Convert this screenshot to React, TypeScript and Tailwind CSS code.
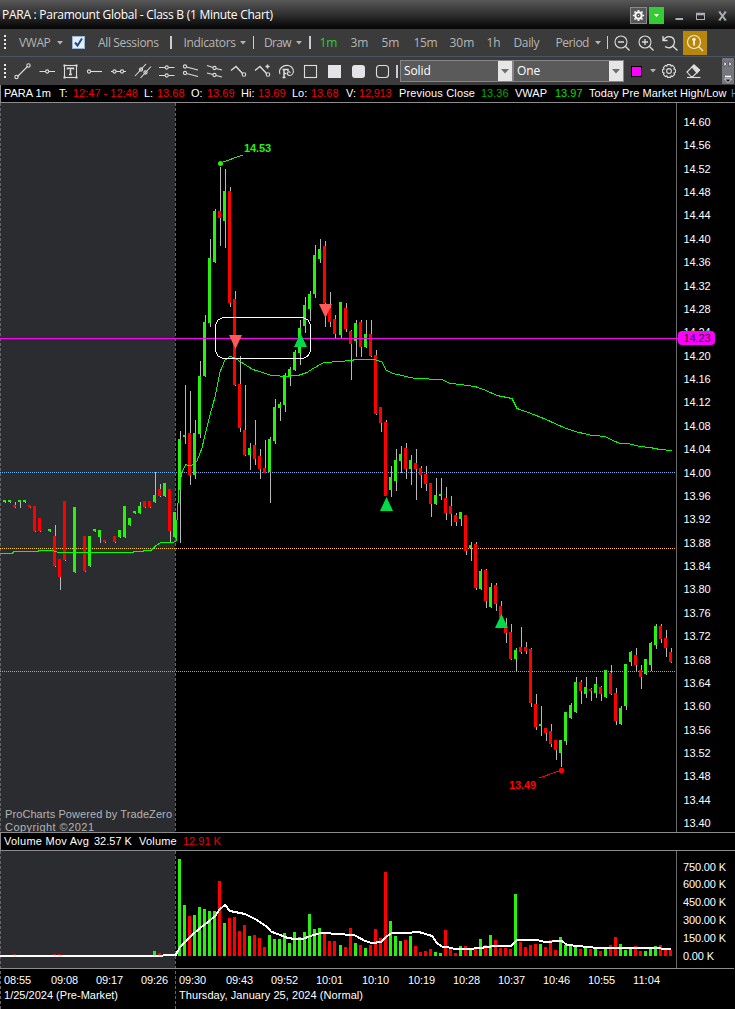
import type { ReactNode } from "react";

type Candle = [
  x: number,
  color: "g" | "r",
  open: number,
  close: number,
  high: number,
  low: number,
];

const UP = "#2af010";
const DOWN = "#ff0000";

const CANDLES: Candle[] = [
  [3, "g", 500, 502, 500, 503], [8, "g", 500, 502, 500, 503], [13, "r", 505, 507, 502, 508],
  [18, "g", 500, 502, 500, 508], [23, "g", 500, 502, 500, 503], [28, "r", 505, 507, 505, 508],
  [33, "r", 506, 531, 506, 532], [38, "r", 518, 531, 518, 532], [48, "g", 529, 531, 529, 532],
  [53, "r", 536, 566, 525, 567], [58, "r", 559, 577, 559, 590], [63, "r", 501, 560, 501, 561],
  [73, "g", 507, 572, 507, 573], [83, "r", 536, 571, 536, 572], [88, "g", 536, 566, 536, 567],
  [93, "g", 529, 531, 529, 532], [98, "g", 530, 537, 530, 543], [103, "r", 540, 542, 540, 543],
  [113, "r", 536, 542, 536, 543], [118, "g", 530, 537, 530, 538], [123, "g", 506, 537, 506, 538],
  [128, "g", 518, 525, 518, 526], [133, "g", 511, 513, 511, 514], [138, "g", 506, 513, 502, 514],
  [143, "r", 501, 507, 501, 508], [148, "r", 501, 507, 501, 508], [153, "g", 495, 502, 472, 503],
  [158, "r", 489, 496, 484, 497], [163, "g", 483, 496, 483, 497], [168, "r", 489, 531, 489, 542],
  [173, "g", 512, 537, 512, 538], [178, "g", 439, 490, 431, 543], [183, "g", 435, 437, 385, 444],
  [188, "r", 433, 475, 391, 485], [193, "g", 433, 475, 420, 479], [198, "g", 376, 434, 361, 438],
  [203, "g", 322, 376, 315, 377], [208, "g", 258, 323, 239, 327], [213, "g", 211, 262, 209, 263],
  [218, "r", 211, 218, 167, 246], [223, "g", 191, 221, 169, 248], [228, "r", 191, 303, 187, 307],
  [233, "r", 299, 385, 291, 386], [238, "r", 384, 428, 356, 432], [243, "r", 430, 455, 385, 456],
  [248, "g", 448, 455, 443, 470], [253, "r", 445, 459, 420, 465], [258, "r", 456, 469, 449, 479],
  [263, "r", 468, 473, 440, 473], [268, "g", 439, 472, 437, 503], [273, "g", 407, 441, 399, 444],
  [278, "g", 404, 408, 402, 421], [283, "g", 375, 405, 373, 412], [288, "g", 369, 377, 367, 386],
  [293, "g", 352, 370, 350, 371], [298, "g", 328, 353, 320, 365], [303, "g", 305, 326, 297, 333],
  [308, "g", 294, 309, 291, 321], [313, "g", 255, 294, 245, 298], [318, "g", 249, 259, 239, 263],
  [323, "r", 246, 303, 241, 327], [328, "r", 308, 322, 292, 327], [333, "r", 319, 334, 315, 338],
  [339, "g", 302, 335, 302, 338], [344, "r", 308, 329, 303, 332], [349, "r", 331, 344, 330, 380],
  [354, "g", 323, 341, 320, 357], [359, "r", 322, 347, 320, 357], [364, "g", 334, 347, 320, 348],
  [369, "r", 334, 356, 320, 357], [374, "r", 355, 414, 350, 415], [379, "r", 407, 423, 407, 432],
  [384, "r", 422, 496, 420, 496], [389, "g", 477, 490, 466, 497], [394, "g", 460, 481, 449, 491],
  [399, "g", 454, 461, 446, 473], [404, "r", 448, 469, 443, 479], [409, "g", 460, 469, 455, 485],
  [414, "r", 463, 469, 449, 500], [419, "r", 468, 475, 466, 488], [424, "r", 474, 484, 466, 491],
  [429, "r", 483, 504, 483, 517], [434, "g", 495, 504, 478, 505], [439, "g", 494, 496, 478, 500],
  [444, "r", 498, 513, 487, 520], [449, "r", 506, 514, 496, 526], [454, "r", 515, 522, 513, 526],
  [459, "g", 512, 519, 512, 526], [464, "r", 515, 551, 515, 555], [469, "g", 545, 548, 542, 561],
  [474, "r", 544, 588, 542, 590], [479, "g", 571, 589, 569, 590], [484, "r", 570, 601, 569, 608],
  [489, "g", 587, 607, 583, 608], [494, "r", 585, 604, 583, 611], [499, "r", 606, 618, 601, 620],
  [504, "r", 625, 633, 618, 643], [509, "r", 632, 659, 624, 660], [514, "g", 650, 659, 648, 671],
  [519, "r", 647, 652, 627, 654], [524, "r", 647, 651, 642, 654], [529, "r", 649, 703, 648, 707],
  [534, "r", 704, 727, 694, 730], [539, "g", 724, 726, 706, 736], [544, "r", 728, 733, 728, 741],
  [549, "r", 731, 744, 724, 747], [554, "r", 740, 750, 740, 760], [559, "g", 740, 753, 740, 767],
  [564, "g", 712, 741, 712, 745], [569, "g", 705, 718, 703, 719], [574, "g", 682, 712, 677, 713],
  [579, "r", 682, 691, 680, 704], [584, "g", 687, 694, 677, 698], [589, "r", 689, 691, 688, 701],
  [594, "g", 684, 693, 677, 698], [599, "r", 687, 694, 686, 701], [604, "g", 670, 697, 670, 698],
  [609, "r", 673, 694, 665, 695], [614, "r", 693, 721, 688, 725], [619, "g", 708, 724, 706, 725],
  [624, "g", 664, 706, 664, 710], [629, "g", 652, 662, 651, 666], [634, "r", 655, 665, 648, 671],
  [639, "r", 670, 677, 665, 689], [644, "g", 659, 674, 659, 675], [649, "g", 643, 665, 642, 671],
  [654, "g", 626, 645, 624, 649], [659, "r", 626, 639, 624, 643], [664, "r", 638, 648, 630, 657],
  [669, "r", 652, 662, 648, 663],
];

// tops of the volume bars, the regular session starts at x = 178
const VOLUME_TOPS: [number, string][] = [
  [859, "g"], [905, "g"], [916, "r"], [915, "g"], [907, "g"], [909, "g"], [911, "g"], [911, "g"],
  [881, "r"], [923, "g"], [918, "r"], [917, "r"], [931, "r"], [925, "r"], [936, "g"], [935, "r"],
  [938, "r"], [947, "r"], [935, "g"], [939, "g"], [939, "g"], [933, "g"], [943, "g"], [932, "g"],
  [937, "g"], [932, "g"], [914, "g"], [929, "g"], [928, "g"], [934, "r"], [941, "r"], [941, "r"],
  [945, "g"], [947, "r"], [928, "r"], [943, "g"], [945, "r"], [948, "g"], [945, "r"], [929, "r"],
  [938, "r"], [872, "r"], [921, "g"], [936, "g"], [941, "g"], [940, "r"], [936, "g"], [946, "r"],
  [952, "r"], [951, "r"], [949, "r"], [952, "g"], [953, "g"], [930, "r"], [949, "r"], [953, "r"],
  [946, "g"], [946, "r"], [950, "g"], [949, "r"], [939, "g"], [945, "r"], [935, "g"], [940, "r"],
  [948, "r"], [948, "r"], [949, "r"], [894, "g"], [942, "r"], [947, "r"], [945, "r"], [944, "r"],
  [944, "g"], [947, "r"], [940, "r"], [950, "r"], [937, "g"], [945, "g"], [945, "g"], [945, "g"],
  [949, "r"], [948, "g"], [949, "r"], [948, "g"], [951, "r"], [949, "g"], [945, "r"], [937, "r"],
  [944, "g"], [950, "g"], [949, "g"], [946, "r"], [951, "r"], [951, "g"], [949, "g"], [946, "g"],
  [945, "r"], [950, "r"], [950, "r"],
];

const PRE_VOLUME: [number, number, string][] = [
  [13, 954, "r"], [53, 954, "r"], [58, 954, "r"], [153, 951, "g"],
  [158, 953, "r"], [163, 955, "g"], [168, 954, "r"],
];

const VWAP_LINE =
  "0,553.5 12,553.5 14,551.5 38,551.5 39,550.5 53,550.5 58,552.5 133,552.5 134,551.5 143,551.5 144,550.5 151,550.5 156,545.5 161,542.5 173,542.5 176,541 177,520 179,487 182,472 186,464.5 190,466 194,464 197,461 202,448 205,435 210,415 215,397 220,372 225,360 230,356.5 235,358 240,361.5 253,369.5 270,375 285,376.5 298,375.5 307,372.5 313,368.5 323,363 337,361.5 353,360.5 354,359.5 374,359.5 382,362 386,370 393,373.5 415,378.5 442,379.5 449,383 460,384.5 475,386.5 485,390 497,395.5 512,398.5 517,408.5 527,412 535,415 545,419 556,424 565,428 575,431.5 590,435 605,436.5 613,440.5 620,443.5 630,444 640,446.5 650,447.5 660,449.5 672,450.5";

const VOLUME_AVG =
  "0,955.5 163,955.5 171,954.5 176,954.5 180,947 190,937 200,928 208,922 215,916 220,909 225,905 230,911 245,914 255,919 266,926 271,931.5 280,935 288,938 295,939 303,939 310,936 321,933 340,934 355,935.5 365,941 372,943 381,942 387,936 392,933 410,933 417,931.5 424,933.5 432,936 437,943 442,946.5 447,947 455,949 468,949 480,948 494,946 511,946 517,940 537,940 547,942.5 555,941 562,941 567,945 578,946 598,948 658,948 664,949 671,949";

const PRICES = Array.from({ length: 31 }, (_, i) => ({
  label: (14.6 - i * 0.04).toFixed(2),
  y: 126 + i * 23.37,
}));

const VOLUMES: [string, number][] = [
  ["750.00 K", 871], ["600.00 K", 888], ["450.00 K", 906],
  ["300.00 K", 924], ["150.00 K", 942], ["0.00 K", 960],
];

const TIMES: [string, number][] = [
  ["08:55", 4], ["09:08", 51], ["09:17", 96], ["09:26", 141], ["09:30", 179],
  ["09:43", 226], ["09:52", 271], ["10:01", 316], ["10:10", 362], ["10:19", 408],
  ["10:28", 453], ["10:37", 498], ["10:46", 543], ["10:55", 588], ["11:04", 633],
];

const QUOTES: [string, string][] = [
  ["PARA 1m", "w-[55px]"], ["T:", "w-[14px]"], ["12:47 - 12:48", "w-[71px] text-[#f00000]"],
  ["L:", "w-[13px]"], ["13.68", "w-[34px] text-[#f00000]"],
  ["O:", "w-[16px]"], ["13.69", "w-[34px] text-[#f00000]"],
  ["Hi:", "w-[17px]"], ["13.69", "w-[34px] text-[#f00000]"],
  ["Lo:", "w-[19px]"], ["13.68", "w-[35px] text-[#f00000]"],
  ["V:", "w-[13px]"], ["12,913", "w-[40px] text-[#f00000] tracking-[-0.2px]"],
  ["Previous Close", "w-[82px] tracking-[0.15px]"], ["13.36", "w-[34px] text-[#00a800]"],
  ["VWAP", "w-[40px]"], ["13.97", "w-[34px] text-[#00e000]"],
  ["Today Pre Market High/Low", "w-[142px] tracking-[0.1px]"],
];

function Caret() {
  return (
    <svg width="6" height="4" viewBox="0 0 6 4" className="shrink-0">
      <path d="M0 0H6L3 3.5Z" fill="#b4b4b4" />
    </svg>
  );
}

function Separator({ className }: { className: string }) {
  return <div className={`h-[13px] w-[1.5px] shrink-0 bg-[#c8ccd2] ${className}`} />;
}

function Grip() {
  return (
    <svg width="3" height="15" viewBox="0 0 3 15" className="ml-1 shrink-0">
      {[0, 4, 8, 12].map((y) => (
        <rect key={y} y={y} width="2" height="2" fill="#e8e8e8" />
      ))}
    </svg>
  );
}

function Label({ children, className }: { children: ReactNode; className: string }) {
  return <span className={`shrink-0 whitespace-nowrap ${className}`}>{children}</span>;
}

function Tool({ children, className = "" }: { children: ReactNode; className?: string }) {
  return (
    <svg
      width="24"
      height="20"
      viewBox="0 0 24 20"
      fill="none"
      stroke="#dcdcdc"
      strokeWidth="1.1"
      className={`shrink-0 ${className}`}
    >
      {children}
    </svg>
  );
}

function Gear() {
  const teeth = [0, 45, 90, 135, 180, 225, 270, 315];
  return (
    <>
      {teeth.map((angle) => (
        <path
          key={angle}
          d="M-2.3 -4.6L-1.5 -6.4H1.5L2.3 -4.6"
          transform={`rotate(${angle})`}
        />
      ))}
      <circle r="2.4" />
    </>
  );
}

function TitleBar() {
  return (
    <div className="flex h-[29px] items-center bg-linear-to-b from-[#585858] via-[#303030] to-[#050505]">
      <span className="ml-[2px] w-[635px] whitespace-nowrap text-[12px] tracking-[-0.27px] text-white">
        PARA : Paramount Global - Class B (1 Minute Chart)
      </span>
      <div className="-ml-[7px] mt-[2px] flex items-center">
        <div className="flex h-[17px] w-[17px] items-center justify-center border border-[#8a8a8a] bg-[#585858]">
          <svg width="15" height="15" viewBox="-7.5 -7.5 15 15" fill="none" stroke="#fff">
            <circle r="3.2" strokeWidth="2" />
            <path
              d="M0 -5.600V-4M0 4V5.600M-5.600 0H-4M4 0H5.600M-4 -4L-2.900 -2.900M4 4L2.900 2.900M-4 4L-2.900 2.900M4 -4L2.900 -2.900"
              strokeWidth="1.700"
            />
            <circle r="0.600" fill="#fff" stroke="none" />
          </svg>
        </div>
        <div className="ml-[2px] flex h-[17px] w-[15px] items-center justify-center bg-[#32cd32]">
          <svg width="5" height="3" viewBox="0 0 5 3">
            <path d="M0 0H5L2.5 3Z" fill="#fff" />
          </svg>
        </div>
        <svg width="56" height="16" viewBox="0 0 56 16" className="ml-[10px]" fill="none" stroke="#a8b0b8">
          <path d="M1.500 11H9" strokeWidth="2" />
          <rect x="22.500" y="5.500" width="8" height="6" />
          <path d="M22 6H31" strokeWidth="2.500" />
          <path d="M45.500 4L51.500 12M51.500 4L45.500 12" strokeWidth="2" />
          <path d="M44.500 4H47M50 4H52.500M44.500 12H47M50 12H52.500" />
        </svg>
      </div>
    </div>
  );
}

function MainToolbar() {
  return (
    <div className="flex h-[28px] items-center border-b border-[#4b5664] bg-[#3b3b3b] text-[12px] text-[#b6b6b6]">
      <Grip />
      <Label className="ml-3 w-[38px] tracking-[-0.4px]">VWAP</Label>
      <Caret />
      <div className="ml-[9px] flex h-[13px] w-[13px] shrink-0 items-center justify-center border border-[#9ab4d8] bg-[#e6eefa]">
        <svg width="11" height="11" viewBox="0 0 11 11">
          <path d="M2 5.500L4.500 8.500L9 1.500" fill="none" stroke="#1e4a86" strokeWidth="2" />
        </svg>
      </div>
      <Label className="ml-[13px] w-[72px] tracking-[-0.35px]">All Sessions</Label>
      <Separator className="mr-[12px]" />
      <Label className="w-[56px] tracking-[-0.35px]">Indicators</Label>
      <Caret />
      <Separator className="mr-[10px] ml-[7px]" />
      <Label className="w-[32px] tracking-[-0.7px]">Draw</Label>
      <Caret />
      <Separator className="mr-[9px] ml-[7px]" />
      <Label className="w-[31px] text-[#32cd32]">1m</Label>
      <Label className="w-[31px]">3m</Label>
      <Label className="w-[32px]">5m</Label>
      <Label className="w-[36px] tracking-[-0.3px]">15m</Label>
      <Label className="w-[37px]">30m</Label>
      <Label className="w-[27px]">1h</Label>
      <Label className="w-[42px] tracking-[-0.35px]">Daily</Label>
      <Label className="w-[39px] tracking-[-0.5px]">Period</Label>
      <Caret />
      <Separator className="mr-[3.5px] ml-[6px]" />
      <Tool>
        <circle cx="9" cy="9" r="6" />
        <path d="M13.300 13.300L17.500 17.500M6 9H12" strokeWidth="1.300" />
      </Tool>
      <Tool>
        <circle cx="9" cy="9" r="6" />
        <path d="M13.300 13.300L17.500 17.500M6 9H12M9 6V12" strokeWidth="1.300" />
      </Tool>
      <Tool>
        <path
          d="M3 3V7.500H7.500M3.500 7C6 2.500 12 2.500 14 6.500C15.500 10 13.500 14.500 9 14.800C7 14.800 6 14.300 5 13.500M13 13.300L17.500 17.500"
          strokeWidth="1.300"
        />
      </Tool>
      <div className="-ml-[1px] flex h-6 w-6 shrink-0 items-center justify-center bg-[#b8860b]">
        <svg width="20" height="20" viewBox="0 0 20 20" fill="none" stroke="#f4ead0" strokeWidth="1.200">
          <circle cx="9" cy="9" r="6.500" />
          <path d="M13.500 13.500L18 18" />
          <path d="M9 7V12.500" strokeWidth="2" />
          <circle cx="9" cy="6.500" r="1.200" fill="#fff" />
        </svg>
      </div>
    </div>
  );
}

function Select({ value, className }: { value: string; className: string }) {
  return (
    <div className={`flex h-[22px] shrink-0 border border-[#858585] bg-[#5a5a5a] ${className}`}>
      <span className="ml-[3px] flex-1 text-[12px] leading-[20px] tracking-[-0.1px] text-white">{value}</span>
      <div className="flex w-[14px] items-center justify-center bg-[#e6e6e6]">
        <svg width="8" height="5" viewBox="0 0 8 5">
          <path d="M0 0H8L4 4.500Z" fill="#6e6e6e" />
        </svg>
      </div>
    </div>
  );
}

function DrawToolbar() {
  return (
    <div className="flex h-[28px] items-center bg-[#3b3b3b]">
      <Grip />
      <Tool className="ml-1">
        <path d="M6.500 15.500L16.500 5.500" />
        <circle cx="5.500" cy="16" r="1.700" />
        <circle cx="17.500" cy="4.500" r="1.700" />
      </Tool>
      <Tool>
        <path d="M4.500 10.500H10.500M14 10.500H20" />
        <circle cx="12.200" cy="10.500" r="1.600" />
      </Tool>
      <Tool>
        <rect x="5.500" y="4.500" width="12" height="12" />
        <path d="M8.500 8.500V7.300H14.500V8.500M11.500 7.500V13.500M10 13.500H13" strokeWidth="1.500" />
        <path d="M4.500 3.500h2v2h-2zM16.500 3.500h2v2h-2zM4.500 15.500h2v2h-2zM16.500 15.500h2v2h-2z" fill="#dcdcdc" stroke="none" />
      </Tool>
      <Tool>
        <circle cx="6" cy="10.500" r="1.600" />
        <path d="M7.500 10.500H19" />
      </Tool>
      <Tool>
        <path d="M4 10.500H6M9 10.500H13.500M16.500 10.500H19" />
        <circle cx="7.500" cy="10.500" r="1.600" />
        <circle cx="15" cy="10.500" r="1.600" />
      </Tool>
      <Tool>
        <path d="M4 15L15 3M9.500 17L20 5.500" />
        <circle cx="10" cy="8.500" r="1.600" />
        <circle cx="14.500" cy="11.500" r="1.600" />
      </Tool>
      <Tool>
        <path d="M4 6.500H10M13.500 6.500H19.500M4 14.500H10M13.500 14.500H19.500" />
        <circle cx="11.700" cy="6.500" r="1.600" />
        <circle cx="11.700" cy="14.500" r="1.600" />
      </Tool>
      <Tool>
        <path d="M7.500 6L19 9M7.500 12.500L19 15.500" />
        <circle cx="6" cy="5.500" r="1.600" />
        <circle cx="6" cy="12" r="1.600" />
      </Tool>
      <Tool>
        <path d="M4 4.500L10 6.500M13 7.500L19 9M4 12L10 13.500M13 14.500L19 16" />
        <circle cx="11.500" cy="7" r="1.600" />
        <circle cx="11.500" cy="14" r="1.600" />
      </Tool>
      <Tool>
        <path d="M4 9.500L9 5.500L15.500 12.500" strokeWidth="1.400" />
        <circle cx="17" cy="13.500" r="1.800" />
      </Tool>
      <Tool>
        <path d="M4 9.500L9 5.500L15.500 12.500M14.500 5.500H18.500M16.500 3.500V7.500" strokeWidth="1.400" />
        <circle cx="17" cy="13.500" r="1.800" />
      </Tool>
      <Tool>
        <path d="M5 13C3 8 8 3.500 13.500 4.500C18 5.500 19.500 10 17.500 13C15.500 15.500 12 14.500 12.500 12C13 10 15.500 10.500 15 12" />
        <path d="M7.500 16.500H10.500M9 16.500V8.500M7.500 8.500H13V10.500M9 12.500H11.500" strokeWidth="1.500" />
      </Tool>
      <Tool>
        <rect x="5.500" y="4.500" width="12" height="12" />
      </Tool>
      <Tool>
        <rect x="5" y="4" width="13" height="13" fill="#e4e4e6" stroke="none" />
      </Tool>
      <Tool>
        <rect x="5" y="4" width="13" height="13" rx="3" fill="#e4e4e6" stroke="none" />
      </Tool>
      <Tool>
        <rect x="5.500" y="4.500" width="12" height="12" rx="3" />
      </Tool>
      <Separator className="mr-[2.5px] ml-[1px]" />
      <Select value="Solid" className="w-[113px]" />
      <Select value="One" className="w-[111px]" />
      <div className="ml-[7px] h-[11px] w-[11px] shrink-0 border border-black bg-[#ff00ff]" />
      <div className="mr-[3px] ml-[8px] flex">
        <Caret />
      </div>
      <Tool>
        <g transform="translate(10 10)">
          <Gear />
        </g>
      </Tool>
      <Tool className="-ml-[1px]">
        <path d="M5 11L12 4L17.500 9L11 15.500H9Z" />
        <path d="M10 6L12 4L17.500 9L15 12Z" fill="#dcdcdc" />
        <path d="M5 16.500H18.500" />
      </Tool>
      <svg width="12" height="26" viewBox="0 0 12 26" className="mr-[1px] ml-auto shrink-0">
        <rect width="12" height="26" rx="1" fill="#76777e" />
        <path d="M2 3.500L5 6L2 8.500ZM7 3.500L10 6L7 8.500Z" fill="#fff" stroke="#111" strokeWidth="0.500" />
        <path d="M3 18.500H9" stroke="#fff" strokeWidth="1.500" />
        <path d="M2.500 21H9.500L6 24.500Z" fill="#111" stroke="#fff" strokeWidth="0.800" />
      </svg>
    </div>
  );
}

function QuoteRow() {
  return (
    <div className="flex h-[18px] items-center overflow-hidden border-b border-l border-[#8c8c8c] bg-black pl-[3px] font-['Liberation_Sans',Arial,sans-serif] text-[11px] text-white">
      {QUOTES.map(([text, className], index) => (
        <span key={`${text}-${index}`} className={`shrink-0 whitespace-nowrap ${className}`}>
          {text}
        </span>
      ))}
      <span className="shrink-0 text-[#4a90e2]">H</span>
    </div>
  );
}

function PriceChart() {
  return (
    <svg
      width="735"
      height="729"
      viewBox="0 103 735 729"
      className="block bg-black font-['Liberation_Sans',Arial,sans-serif] text-[11px]"
    >
      <rect x="0" y="103" width="175" height="729" fill="#2b2c30" />
      <g shapeRendering="crispEdges">
        <path d="M0.500 103V832M175.500 103V832" stroke="#66666a" strokeDasharray="3 2" />
        <path d="M676.500 103V832" stroke="#6a6a6a" />
        <path d="M0 472.500H676M0 671.500H676" stroke="#6fb1ea" strokeDasharray="1 1" />
        <path d="M0 548.500H676" stroke="#ffc83c" strokeDasharray="1 1" />
        {CANDLES.map(([x, color, open, close, high, low]) => (
          <g key={x}>
            <rect x={x + 2} y={high} width="1" height={low - high} fill="#b8b8b8" />
            <rect x={x} y={open} width="3" height={close - open} fill={color === "g" ? UP : DOWN} />
          </g>
        ))}
        <polyline points={VWAP_LINE} fill="none" stroke="#00ff00" />
        <path d="M0 338.500H678" stroke="#ff00ff" />
        <rect x="215.500" y="317.500" width="95" height="41" rx="9" fill="none" stroke="#fff" />
        <path d="M223 162L243 155" stroke={UP} />
        <path d="M539 778L559 771" stroke={DOWN} />
      </g>
      <circle cx="220.500" cy="163.500" r="2.500" fill={UP} />
      <circle cx="561.500" cy="770.500" r="2.700" fill={DOWN} />

      <path d="M229 335H242L235.500 349ZM319 304H332L325.500 318Z" fill="#ff5a5a" />
      <path
        d="M294 347H307L300.500 333ZM380 511H393L386.500 497ZM495 628H508L501.500 614Z"
        fill="#00dc46"
      />

      <text x="244" y="152" textLength="27" fill={UP} className="font-bold">14.53</text>
      <text x="509" y="789" textLength="27" fill={DOWN} className="font-bold">13.49</text>

      <g fill="#fff">
        {PRICES.map(({ label, y }) => (
          <text key={label} x="683.500" y={Math.round(y)} textLength="27">
            {label}
          </text>
        ))}
      </g>
      <rect x="678" y="331" width="37" height="14" rx="4" fill="#ff00ff" />
      <text x="683.500" y="342" textLength="27" fill="#1a001a">14.23</text>

      <g fill="#b4b4b4">
        <text x="5" y="818" textLength="167">ProCharts Powered by TradeZero</text>
        <text x="5" y="831" textLength="89">Copyright ©2021</text>
      </g>
    </svg>
  );
}

function VolumeHeader() {
  return (
    <div className="flex h-[19px] items-center border-y border-l border-[#8c8c8c] bg-black pl-[3px] font-['Liberation_Sans',Arial,sans-serif] text-[11px] text-white">
      <span className="w-[90px] whitespace-nowrap tracking-[0.25px]">Volume Mov Avg</span>
      <span className="w-[45px] whitespace-nowrap">32.57 K</span>
      <span className="w-[44px] tracking-[0.2px]">Volume</span>
      <span className="whitespace-nowrap text-[#f00000]">12.91 K</span>
    </div>
  );
}

function VolumeChart() {
  return (
    <svg
      width="735"
      height="158"
      viewBox="0 851 735 158"
      className="block bg-black font-['Liberation_Sans',Arial,sans-serif] text-[11px]"
    >
      <rect x="0" y="851" width="175" height="117" fill="#2b2c30" />
      <g shapeRendering="crispEdges">
        <path d="M0.500 851V1009M175.500 851V1009" stroke="#66666a" strokeDasharray="3 2" />
        <path d="M676.500 851V968" stroke="#6a6a6a" />
        <path d="M0 968.500H734" stroke="#8c8c8c" />
        {PRE_VOLUME.map(([x, top, color]) => (
          <rect key={x} x={x} y={top} width="3" height={956 - top} fill={color === "g" ? UP : DOWN} />
        ))}
        {VOLUME_TOPS.map(([top, color], i) => (
          <rect
            key={i}
            x={178 + i * 5 + (i >= 32 ? 1 : 0)}
            y={top}
            width="3"
            height={956 - top}
            fill={color === "g" ? UP : DOWN}
          />
        ))}
        <polyline points={VOLUME_AVG} fill="none" stroke="#fff" strokeWidth="2" />
      </g>
      <g fill="#fff">
        {VOLUMES.map(([label, y]) => (
          <text key={label} x="683" y={y} textLength={label === "0.00 K" ? 31 : 43}>
            {label}
          </text>
        ))}
        {TIMES.map(([label, x]) => (
          <text key={label} x={x} y="984" textLength="27">
            {label}
          </text>
        ))}
        <text x="4" y="999" textLength="114">1/25/2024 (Pre-Market)</text>
        <text x="179" y="999" textLength="184">Thursday, January 25, 2024 (Normal)</text>
      </g>
    </svg>
  );
}

export default function App() {
  return (
    <div className="flex h-[1009px] w-[735px] flex-col overflow-hidden bg-black font-['Open_Sans','Noto_Sans',sans-serif]">
      <TitleBar />
      <MainToolbar />
      <DrawToolbar />
      <QuoteRow />
      <PriceChart />
      <VolumeHeader />
      <VolumeChart />
    </div>
  );
}
